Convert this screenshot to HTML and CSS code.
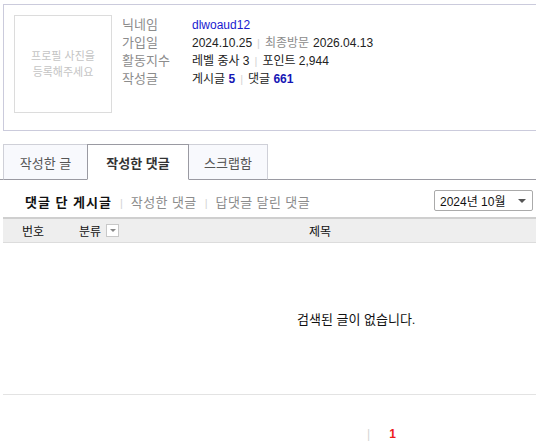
FILE: index.html
```html
<!DOCTYPE html>
<html lang="ko">
<head>
    <meta charset="UTF-8">
    <meta name="viewport" content="width=device-width, initial-scale=1.0">
    <title>내 활동</title>
    <link rel="stylesheet" href="styles.css">
</head>
<body>
    <div class="profile">
        <div class="photo">프로필 사진을<br>등록해주세요</div>
        <ul class="info">
            <li><span class="label">닉네임</span><a class="nick">dlwoaud12</a></li>
            <li><span class="label">가입일</span>2024.10.25<span class="bar">|</span><span class="sub">최종방문</span>2026.04.13</li>
            <li><span class="label">활동지수</span>레벨 중사 3<span class="bar">|</span>포인트 2,944</li>
            <li><span class="label">작성글</span>게시글 <b class="num">5</b><span class="bar">|</span>댓글 <b class="num">661</b></li>
        </ul>
    </div>

    <div class="tabs">
        <a class="tab">작성한 글</a>
        <a class="tab active">작성한 댓글</a>
        <a class="tab">스크랩함</a>
    </div>

    <div class="subnav">
        <div class="sublinks">
            <a class="on">댓글 단 게시글</a><span class="bar">|</span><a>작성한 댓글</a><span class="bar">|</span><a>답댓글 달린 댓글</a>
        </div>
        <div class="month">2024년 10월<span class="caret"></span></div>
    </div>

    <div class="board">
        <div class="board-head">
            <span class="col-no">번호</span>
            <span class="col-cat">분류<span class="mini-sel"></span></span>
            <span class="col-title">제목</span>
        </div>
        <div class="empty">검색된 글이 없습니다.</div>
    </div>

    <div class="paging">
        <span class="bar">|</span><a class="cur">1</a>
    </div>
</body>
</html>
```

FILE: styles.css
```css
body {
    margin: 0;
    font-family: "Liberation Sans", "Noto Sans CJK KR", sans-serif;
    font-size: 12px;
    color: #222;
    background: #fff;
    overflow: hidden;
}
a {
    text-decoration: none;
    color: inherit;
}
ul {
    list-style: none;
    margin: 0;
    padding: 0;
}
.bar {
    color: #d4d4d4;
    margin: 0 5px;
    font-size: 11px;
}

/* profile box */
.profile {
    display: flex;
    margin: 4px -20px 0 3px;
    border: 1px solid #cbcbdc;
    box-sizing: border-box;
    height: 127px;
    padding: 10px 0 0 10px;
}
.photo {
    width: 96px;
    height: 96px;
    border: 1px solid #dcdcdc;
    display: flex;
    align-items: center;
    justify-content: center;
    text-align: center;
    color: #c4c4c4;
    font-size: 11px;
    line-height: 16px;
}
.info {
    margin-left: 10px;
    padding-top: 1px;
}
.info li {
    height: 18px;
    line-height: 18px;
    white-space: nowrap;
}
.label {
    display: inline-block;
    width: 70px;
    color: #8c8c8c;
    font-size: 13px;
}
.nick {
    color: #1a1ad0;
}
.sub {
    color: #8c8c8c;
    margin-right: 4px;
}
.num {
    color: #1515b5;
}

/* tabs */
.tabs {
    display: flex;
    margin-top: 13px;
    border-bottom: 1px solid #9a9aa2;
    padding-left: 3px;
    height: 35px;
}
.tab {
    display: flex;
    align-items: center;
    justify-content: center;
    background: #f8f9fd;
    border: 1px solid #cfd0d8;
    color: #555;
    font-size: 13px;
    margin-bottom: -1px;
    height: 36px;
    box-sizing: border-box;
}
.tab:nth-child(1) {
    width: 84px;
    border-right: none;
    border-bottom-color: #9a9aa2;
}
.tab.active {
    width: 102px;
    background: #fff;
    border: 1px solid #9a9aa2;
    border-bottom-color: #fff;
    color: #333;
    font-weight: bold;
}
.tab:nth-child(3) {
    width: 79px;
    border-left: none;
    border-bottom-color: #9a9aa2;
}

/* sub menu + month select */
.subnav {
    display: flex;
    justify-content: space-between;
    align-items: center;
    height: 37px;
    padding: 0 3px 0 25px;
}
.sublinks {
    color: #8c8c8c;
    font-size: 13px;
    letter-spacing: 0.4px;
    padding-top: 5px;
}
.sublinks .bar {
    margin: 0 8px;
    letter-spacing: 0;
}
.sublinks .on {
    color: #111;
    font-weight: bold;
    letter-spacing: 1px;
}
.month {
    display: flex;
    align-items: center;
    justify-content: space-between;
    width: 99px;
    height: 21px;
    box-sizing: border-box;
    border: 1px solid #aaa;
    border-radius: 2px;
    padding: 0 6px 0 5px;
    font-size: 12px;
    color: #111;
    margin-top: 4px;
}
.caret {
    width: 0;
    height: 0;
    border-left: 4px solid transparent;
    border-right: 4px solid transparent;
    border-top: 4px solid #555;
}

/* list */
.board {
    margin-left: 3px;
    border-bottom: 1px solid #e3e3e3;
}
.board-head {
    display: flex;
    align-items: center;
    height: 23px;
    background: #eeeeee;
    border-top: 2px solid #cfcfcf;
    border-bottom: 1px solid #dcdcdc;
    color: #111;
}
.col-no {
    width: 57px;
    padding-left: 19px;
}
.col-cat {
    display: flex;
    align-items: center;
    width: 230px;
}
.mini-sel {
    position: relative;
    width: 11px;
    height: 11px;
    margin-left: 5px;
    border: 1px solid #c8c8c8;
    background: #fff;
}
.mini-sel::after {
    content: "";
    position: absolute;
    left: 3px;
    top: 4px;
    border-left: 3px solid transparent;
    border-right: 3px solid transparent;
    border-top: 3px solid #888;
}
.empty {
    height: 151px;
    display: flex;
    align-items: center;
    padding-left: 294px;
    font-size: 13px;
    color: #111;
}

/* paging */
.paging {
    display: flex;
    align-items: center;
    padding: 32px 0 0 362px;
}
.paging .bar {
    font-size: 12px;
}
.cur {
    color: #ee1c1c;
    font-weight: bold;
    margin-left: 14px;
}
```
